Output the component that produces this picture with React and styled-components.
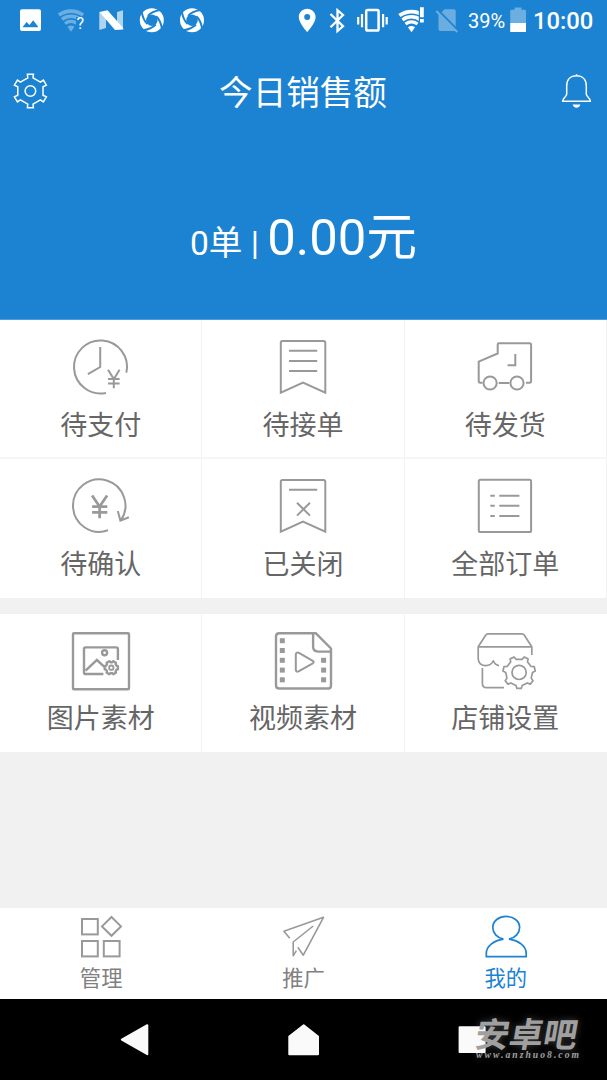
import React, { useState } from 'react'
import styled, { createGlobalStyle } from 'styled-components'

const BLUE = '#1c83d3'

const GlobalStyle = createGlobalStyle`
    body{
        margin:0;
        background:#f1f1f1;
        font-family:Roboto, "Noto Sans CJK SC", sans-serif;
    }
`

const Screen = styled.div`
    display:flex;
    flex-direction:column;
    width:607px;
    height:1080px;
    overflow:hidden;
    background:#f1f1f1;
`

const Header = styled.header`
    height:320px;
    box-sizing:border-box;
    border-bottom:1px solid #4b9edd;
    color:#fff;
    background:${BLUE};
`

const StatusBar = styled.div`
    display:flex;
    justify-content:space-between;
    height:41px;
`

const StatusGroup = styled.div`
    display:flex;
    height:41px;
`

const StatusSvg = styled.svg`
    display:block;
    flex:none;
    height:41px;
    width:${p => p.$w}px;
    fill:#fff;
`

const BatteryText = styled.span`
    width:42px;
    padding-left:3px;
    box-sizing:border-box;
    font-size:20px;
    line-height:43px;
`

const Clock = styled.span`
    width:74px;
    font-size:23.8px;
    font-weight:500;
    line-height:43px;
`

const TitleBar = styled.div`
    display:flex;
    align-items:center;
    justify-content:space-between;
    height:100px;
    padding:0 11px 0 10px;
`

const Title = styled.h1`
    margin:5px 0 0;
    font-size:33.6px;
    font-weight:400;
    line-height:50px;
`

const HeaderIcon = styled.svg`
    width:40px;
    height:40px;
    fill:none;
    stroke:#fff;
    stroke-width:1.5;
`

const Sales = styled.div`
    display:flex;
    align-items:baseline;
    justify-content:center;
    padding-top:60px;
    line-height:74px;
    white-space:pre;
`

const SalesCount = styled.span`
    font-size:33.6px;
`

const SalesAmount = styled.span`
    font-size:50.8px;
`

const Grid = styled.section`
    display:grid;
    grid-template-columns:repeat(3, 1fr);
    grid-auto-rows:${p => p.$row}px;
    margin-bottom:16px;
    background:#fff;
`

const Cell = styled.button`
    display:flex;
    flex-direction:column;
    align-items:center;
    padding:17px 0 0;
    border:0;
    border-right:1px solid ${p => p.$last ? '#fff' : '#f2f2f2'};
    border-bottom:${p => p.$line ? '2px solid #f6f6f6' : '0'};
    background:#fff;
    font-family:inherit;
    cursor:pointer;
`

const CellIcon = styled.svg`
    width:64px;
    height:60px;
    fill:none;
    stroke:#999;
    stroke-width:2;
`

const CellLabel = styled.span`
    margin-top:${p => p.$up ? '8px' : '9px'};
    color:#666;
    font-size:27px;
    line-height:40px;
`

const TabBar = styled.nav`
    display:grid;
    grid-template-columns:repeat(3, 1fr);
    height:91px;
    margin-top:auto;
    background:#fff;
`

const Tab = styled.button`
    display:flex;
    flex-direction:column;
    align-items:center;
    padding:5px 0 0;
    border:0;
    background:none;
    font-family:inherit;
    color:${p => p.$active ? BLUE : '#808080'};
    cursor:pointer;
`

const TabIcon = styled.svg`
    width:48px;
    height:46px;
    fill:none;
    stroke:${p => p.$active ? BLUE : '#999'};
    stroke-width:1.6;
`

const TabLabel = styled.span`
    margin-top:4px;
    font-size:21.3px;
    line-height:32px;
`

const SystemBar = styled.footer`
    position:relative;
    display:flex;
    align-items:center;
    justify-content:space-around;
    height:81px;
    padding:0 50px;
    background:#000;
`

const SystemIcon = styled.svg`
    width:36px;
    height:36px;
    fill:#fafafa;
    stroke:#fafafa;
    stroke-width:2;
    stroke-linejoin:round;
`

const Watermark = styled.div`
    position:absolute;
    left:476px;
    top:13px;
    width:106px;
    color:#a0a0a0;
    text-shadow:0 0 7px rgba(255, 255, 255, .25);
`

const WatermarkName = styled.div`
    font-family:"Noto Sans CJK SC", sans-serif;
    font-size:34px;
    font-weight:700;
    line-height:42px;
    transform:skewX(-10deg);
`

const WatermarkUrl = styled.div`
    margin-top:-4px;
    font-family:"Liberation Serif", serif;
    font-size:9.6px;
    font-style:italic;
    font-weight:700;
    letter-spacing:2.05px;
    line-height:10px;
    white-space:nowrap;
`

function gear(cx, cy, teeth, outer, inner, start, top = .2, base = .3){
    const step = Math.PI * 2 / teeth
    const pts = []
    for (let i = 0; i < teeth; i++) {
        const a = start * Math.PI / 180 + i * step
        const corners = [[inner, -base], [outer, -top], [outer, top], [inner, base]]
        corners.forEach(([r, o]) => {
            pts.push((cx + r * Math.cos(a + o * step)).toFixed(2) + ' ' + (cy + r * Math.sin(a + o * step)).toFixed(2))
        })
    }
    return 'M' + pts.join('L') + 'Z'
}

function Wifi({ x, y }){
    const arc = r => `M${x - r * .59} ${y - r * .81}A${r} ${r} 0 0 1 ${x + r * .59} ${y - r * .81}`
    return (
        <>
            <path d={arc(20.5)} fill="none" stroke="#fff" strokeWidth="3.7" />
            <path d={arc(15.3)} fill="none" stroke="#fff" strokeWidth="3.5" />
            <path d={arc(10.2)} fill="none" stroke="#fff" strokeWidth="3.2" />
            <path d={arc(6) + `L${x} ${y}Z`} />
        </>
    )
}

function Swirl({ x }){
    return (
        <g transform={`translate(${x} 20.2)`} fill="none">
            <circle r="8.9" stroke="#fff" strokeWidth="6.2" />
            {[10, 100, 190, 280].map(deg => (
                <path key={deg} transform={`rotate(${deg})`} d="M-4.6 -3.6Q-1.4 -8.6 6.4 -11.4" stroke={BLUE} strokeWidth="2" />
            ))}
        </g>
    )
}

const yen = 'M39 32.8L44.8 42L50.6 32.8M44.8 42V51.2M39 42H50.6M39 46.6H50.6'
const bookmark = 'M9.8 55.6V5.8Q9.8 4 11.6 4H52.4Q54.3 4 54.3 5.8V55.6L32 45.6Z'

const orders = [
    { name: '待支付', icon: <><path d="M36.9 55.9A26.5 26.5 0 1 1 57.4 35.6M31.2 10V30L18.9 37.2" /><path d={yen} /></> },
    { name: '待接单', icon: <path d={bookmark + 'M18 13.8H46.2M18 24.1H46.2M18 34.1H46.2'} /> },
    { name: '待发货', icon: <>
        <path d="M9.5 45.8H7.2Q5.7 45.8 5.7 44V24.7L24.7 16.5V7.5Q24.7 6.2 26 6.2H56.5Q58.1 6.2 58.1 7.8V44Q58.1 45.8 56.6 45.8H53M25.7 46H36.3M42.3 17V28.3H34.6" />
        <circle cx="17.1" cy="46" r="6.6" />
        <circle cx="44" cy="46" r="6.6" />
    </> },
    { name: '待确认', icon: <>
        <path d="M39 54.3A26.2 26.2 0 1 1 51.7 44.6M48.8 35L51.4 44.6L59.9 41.3" />
        <path d="M23.1 19.4L30.6 30.5L38.1 19.4M30.6 30V42.2M23.1 30.6H38.3M23.1 36.4H38.3" strokeWidth="2.7" />
    </> },
    { name: '已关闭', icon: <path d={bookmark + 'M18 13.8H46.2M26 26.8L39 39.6M39 26.8L26 39.6'} /> },
    { name: '全部订单', icon: <>
        <rect x="5.8" y="3.7" width="52.3" height="52.3" rx="1.6" />
        <path d="M17.3 19.7H21.8M17.3 29.8H21.8M17.3 40H21.8M26.3 19.7H46.4M26.3 29.8H46.4M26.3 40H46.4" />
    </> },
]

const tools = [
    { name: '图片素材', icon: <g strokeWidth="2.4">
        <rect x="4" y="2.2" width="56" height="56" rx="1" />
        <path d="M34.4 43H16.6Q15 43 15 41.4V18Q15 16.4 16.6 16.4H47.2Q48.9 16.4 48.9 18V29M16.6 39.7L27.9 29L35.4 35.8" />
        <circle cx="35.6" cy="21.7" r="2.5" />
        <path d={gear(42.3, 36.7, 6, 6.8, 5.6, 0, .22, .34)} strokeLinejoin="round" />
        <circle cx="42.3" cy="36.7" r="2.2" strokeWidth="1.8" />
    </g> },
    { name: '视频素材', icon: <g strokeWidth="2.4" strokeLinejoin="round">
        <path d="M43.5 2.2H8.3Q5 2.2 5 5.3V54.5Q5 57.5 8.3 57.5H57.5Q60 57.5 60 54.5V17.5L44.7 2.2H42.1V15.6Q42.1 20.6 47.1 20.6H60" />
        <path d="M24.8 23.4V38.8Q25 41.4 27.5 40.3L41.8 32.4Q43.6 31 41.8 29.8L27.5 21.7Q25.1 20.9 24.8 23.4Z" strokeWidth="2" />
        <g fill="#999" stroke="none">
            {[7.2, 17, 26.8, 36.6, 46.3].map(y => <rect key={y} x="8.8" y={y} width="5" height="5" />)}
            {[26.8, 36.6, 46.3].map(y => <rect key={y} x="50.1" y={y} width="5" height="5" />)}
        </g>
    </g> },
    { name: '店铺设置', icon: <g strokeWidth="1.7" strokeLinejoin="round">
        <path d="M58.8 24V15.8L51.2 4Q50.4 2.8 49 2.8H15Q13.6 2.8 12.8 4L5.2 15.8H58.8M5.2 15.8V27.5C5.2 32 8.5 34.7 12.6 34.7C16.6 34.7 19.2 32.5 20.3 29.8C21.4 32.5 23.3 34.2 26 34.7M9.4 37V52.5Q9.4 56.7 13.6 56.7H31" />
        <path d={gear(46.1, 41.4, 7, 16.2, 13.4, 90, .15, .26)} />
        <circle cx="46.1" cy="41.4" r="7.1" />
    </g> },
]

const tabs = [
    { name: '管理', icon: <g strokeWidth="2">
        <rect x="5" y="6" width="15.8" height="15.4" />
        <rect x="5" y="28" width="15.8" height="15.4" />
        <rect x="26.8" y="28" width="15.8" height="15.4" />
        <path d="M34.5 4L44 13.4L34.5 22.8L25 13.4Z" />
    </g> },
    { name: '推广', icon: <path strokeLinejoin="round" d="M10.8 25.3L4.9 18.3L44.5 4.3L24.3 42.2L18.8 34.3M34.2 13L14.2 29V42.8L17.4 37.6" /> },
    { name: '我的', icon: <path strokeWidth="1.7" d="M21.5 26.1C15 24.8 10.8 20 10.8 14.4C10.8 8 17 3.4 24.2 3.4S37.6 8 37.6 14.4C37.6 20 33.5 24.8 27 26.1C37 27.5 44.2 33.5 44.2 40.4V43.7H4.3V40.4C4.3 33.5 11.5 27.5 21.5 26.1" /> },
]

function Status(){
    return (
        <StatusBar>
            <StatusGroup>
                <StatusSvg $w={210} viewBox="0 0 210 41">
                    <path fillRule="evenodd" d="M22 9.3H39Q41 9.3 41 11.3V29Q41 31 39 31H22Q20 31 20 29V11.3Q20 9.3 22 9.3ZM22.5 27.3H38.5L33.2 20.3L29.5 25L26.6 22Z" />
                    <g opacity=".35"><Wifi x={71} y={31.7} /></g>
                    <path d="M76 17H85V31H76Z" fill={BLUE} />
                    <text x="76.4" y="29" fontSize="16">?</text>
                    <path opacity=".65" d="M99.3 12L106 15V28L99.3 30ZM123 10.3L117 12V25L123 28Z" />
                    <path d="M99.5 12L107.5 10.3L123.2 28V29.5L115 30Z" />
                    <Swirl x={151.8} />
                    <Swirl x={192} />
                </StatusSvg>
            </StatusGroup>
            <StatusGroup>
                <StatusSvg $w={35} viewBox="290 0 35 41">
                    <path fillRule="evenodd" d="M307.2 8.8C311.9 8.8 315.6 12.5 315.6 17.1C315.6 23.2 307.2 32.2 307.2 32.2S298.8 23.2 298.8 17.1C298.8 12.5 302.5 8.8 307.2 8.8ZM307.2 14.1A3 3 0 1 0 307.2 20.1A3 3 0 1 0 307.2 14.1Z" />
                </StatusSvg>
                <StatusSvg $w={27} viewBox="325 0 27 41">
                    <path d="M330.5 14L343 26.3L337.5 31V10.2L343 15L330.5 27.2" fill="none" stroke="#fff" strokeWidth="2.3" />
                </StatusSvg>
                <StatusSvg $w={42} viewBox="352 0 42 41">
                    <rect x="366.2" y="10" width="12.4" height="20.6" rx="1.6" fill="none" stroke="#fff" strokeWidth="2.5" />
                    <path d="M358.2 17V24.5M362 14V27.3M383.1 14V27.3M386.7 17V24.5" stroke="#fff" strokeWidth="2.2" />
                </StatusSvg>
                <StatusSvg $w={36} viewBox="394 0 36 41">
                    <Wifi x={411.5} y={32.2} />
                    <path d="M418.8 6H425V24H418.8Z" fill={BLUE} />
                    <path d="M420 7.3H423.8V17.3H420ZM420 19H423.8V22.5H420Z" />
                </StatusSvg>
                <StatusSvg $w={35} viewBox="430 0 35 41">
                    <path fill="#6bade1" d="M440 14L444.5 9.3H454Q455.7 9.3 455.7 11V31H440Q438.5 31 438.5 29V14Z" />
                    <path d="M437.8 10L458.5 31" stroke={BLUE} strokeWidth="2.2" />
                    <path d="M436.3 11L457.3 32" stroke="#6bade1" strokeWidth="2" />
                </StatusSvg>
                <BatteryText>39%</BatteryText>
                <StatusSvg $w={26} viewBox="507 0 26 41">
                    <path opacity=".35" d="M510.2 11Q510.2 9.7 511.5 9.7H514.5V7.5H521.5V9.7H524.7Q526 9.7 526 11V23H510.2Z" />
                    <path d="M510.2 23H526V32H510.2Z" />
                </StatusSvg>
                <Clock>10:00</Clock>
            </StatusGroup>
        </StatusBar>
    )
}

export default function App() {

    const [activeTab, setActiveTab] = useState('我的')

return (
    <>
    <GlobalStyle />
    <Screen>
        <Header>
            <Status />
            <TitleBar>
                <HeaderIcon viewBox="0 0 40 40">
                    <path d={gear(20.4, 20, 6, 17, 13.3, 30, .17, .19)} />
                    <circle cx="20.4" cy="20" r="5.3" />
                </HeaderIcon>
                <Title>今日销售额</Title>
                <HeaderIcon viewBox="0 0 40 40">
                    <path d="M20.5 3.2V4.5M10.7 15C10.7 8.6 14.5 4.8 20.5 4.8S30.3 8.6 30.3 15V23C30.3 26 34.3 26.5 34.3 30.2H6.7C6.7 26.5 10.7 26 10.7 23Z" />
                    <path d="M16.6 33.6H24.4C24 35.5 22.5 36.8 20.5 36.8S17 35.5 16.6 33.6Z" fill="#fff" stroke="none" />
                </HeaderIcon>
            </TitleBar>
            <Sales>
                <SalesCount>0单 | </SalesCount>
                <SalesAmount>0.00元</SalesAmount>
            </Sales>
        </Header>
        <Grid $row={139}>
            {orders.map((item, i) => (
                <Cell key={item.name} $line={i < 3}>
                    <CellIcon viewBox="0 0 64 60">{item.icon}</CellIcon>
                    <CellLabel>{item.name}</CellLabel>
                </Cell>
            ))}
        </Grid>
        <Grid $row={138}>
            {tools.map((item, i) => (
                <Cell key={item.name} $last={i === 2}>
                    <CellIcon viewBox="0 0 64 60">{item.icon}</CellIcon>
                    <CellLabel $up>{item.name}</CellLabel>
                </Cell>
            ))}
        </Grid>
        <TabBar>
            {tabs.map(item => (
                <Tab key={item.name} $active={item.name === activeTab} onClick={() => setActiveTab(item.name)}>
                    <TabIcon viewBox="0 0 48 46" $active={item.name === activeTab}>{item.icon}</TabIcon>
                    <TabLabel>{item.name}</TabLabel>
                </Tab>
            ))}
        </TabBar>
        <SystemBar>
            <SystemIcon viewBox="0 0 36 36"><path d="M4.8 17.6L30.3 3.2V32.2Z" /></SystemIcon>
            <SystemIcon viewBox="0 0 36 36"><path d="M17.7 3.3L32 14.5V32.2H3.3V14.5Z" /></SystemIcon>
            <SystemIcon viewBox="0 0 36 36"><path d="M4.6 5.3H29.6V30H4.6Z" /></SystemIcon>
            <Watermark>
                <WatermarkName>安卓吧</WatermarkName>
                <WatermarkUrl>www.anzhuo8.com</WatermarkUrl>
            </Watermark>
        </SystemBar>
    </Screen>
    </>
)
}
